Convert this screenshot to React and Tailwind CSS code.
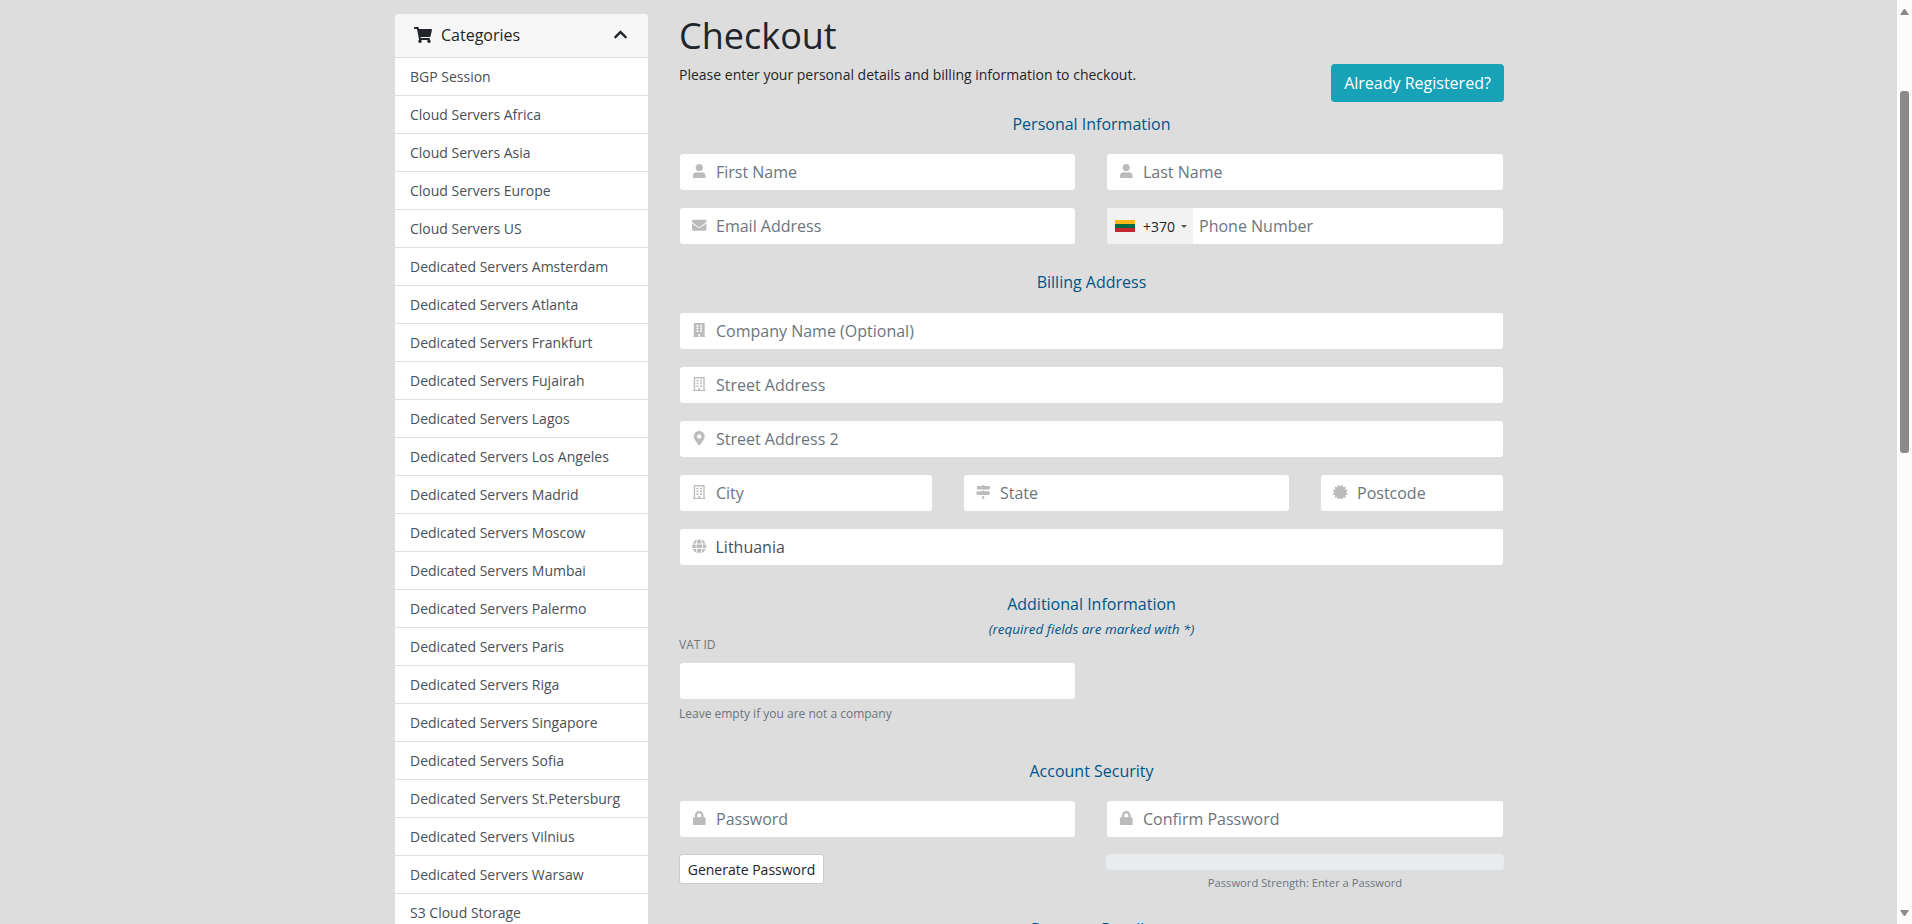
import React from "react";
import { FaUser, FaEnvelope, FaBuilding, FaRegBuilding, FaMapMarkerAlt, FaMapSigns, FaCertificate, FaGlobe, FaLock, FaShoppingCart, FaChevronUp } from "react-icons/fa";

const cats = ["BGP Session","Cloud Servers Africa","Cloud Servers Asia","Cloud Servers Europe","Cloud Servers US","Dedicated Servers Amsterdam","Dedicated Servers Atlanta","Dedicated Servers Frankfurt","Dedicated Servers Fujairah","Dedicated Servers Lagos","Dedicated Servers Los Angeles","Dedicated Servers Madrid","Dedicated Servers Moscow","Dedicated Servers Mumbai","Dedicated Servers Palermo","Dedicated Servers Paris","Dedicated Servers Riga","Dedicated Servers Singapore","Dedicated Servers Sofia","Dedicated Servers St.Petersburg","Dedicated Servers Vilnius","Dedicated Servers Warsaw","S3 Cloud Storage"];

function Field({ icon: Icon, placeholder, className = "", value }) {
  return (
    <div className={"flex items-center h-[36px] bg-white rounded-[3px] " + className}>
      <span className="w-[36px] pl-[3px] flex items-center justify-center shrink-0 text-[#bbbbbb] text-[14.5px] -translate-y-[1px]">
        <Icon />
      </span>
      {value
        ? <span className="text-[16px] text-[#495057] leading-[24px] -ml-[0.5px]">{value}</span>
        : <input placeholder={placeholder} className="flex-1 min-w-0 h-full bg-transparent outline-none text-[16px] placeholder:text-[#6c757d] placeholder:opacity-100" />}
    </div>
  );
}

function Heading({ children, className = "" }) {
  return <h2 className={"text-center text-[16px] leading-[24px] text-[#058] font-normal " + className}>{children}</h2>;
}

export default function App() {
  return (
    <div className="h-[924px] w-full overflow-hidden flex bg-[#dddddd] font-['Open_Sans',sans-serif] text-[#212529]">
      <div className="flex-1 min-w-0 flex justify-center overflow-hidden">
        <div className="w-[1109px] shrink-0 flex items-start ml-[2px]">
          <aside className="w-[253px] shrink-0 mt-[14px] rounded-t-[3px] overflow-hidden">
            <div className="h-[44px] bg-[#f6f6f6] border-b border-[#dfdfdf] flex items-center pl-[19px] pr-[21px] pb-[1px] text-[#212529]">
              <FaShoppingCart className="w-[18px] h-[16px] mr-[9px]" />
              <span className="text-[16px] flex-1">Categories</span>
              <FaChevronUp className="w-[15px] h-[15px] mr-[-1px] -translate-y-[1px]" />
            </div>
            {cats.map((c) => (
              <a key={c} className="block h-[38px] bg-white border-b border-[#dfdfdf] pl-[15px] text-[14px] leading-[37px] text-[#495057]">{c}</a>
            ))}
          </aside>
          <main className="w-[825px] ml-[31px] shrink-0">
            <h1 className="text-[36px] leading-[43px] font-normal mt-[14px] text-[#212529]">Checkout</h1>
            <div className="flex justify-between items-start h-[38px] mt-[7px] -mb-[8px]">
              <p className="text-[14px] leading-[21px]">Please enter your personal details and billing information to checkout.</p>
              <button className="h-[38px] w-[173px] bg-[#17a2b8] text-white text-[16px] rounded-[4px]">Already Registered?</button>
            </div>
            <Heading className="mt-[18px]">Personal Information</Heading>
            <div className="grid grid-cols-[395px_396px] gap-x-[32px] gap-y-[18px] mt-[18px] px-[1px]">
              <Field icon={FaUser} placeholder="First Name" />
              <Field icon={FaUser} placeholder="Last Name" />
              <Field icon={FaEnvelope} placeholder="Email Address" />
              <div className="flex items-center h-[36px] bg-white rounded-[3px] overflow-hidden">
                <div className="w-[86px] h-full bg-[#f2f2f2] flex items-center pl-[8px] shrink-0">
                  <svg width="20" height="12" viewBox="0 0 20 12" className="shrink-0"><rect width="20" height="4" fill="#fdb913"/><rect y="4" width="20" height="4" fill="#006a44"/><rect y="8" width="20" height="4" fill="#c1272d"/></svg>
                  <span className="text-[14px] ml-[8px]">+370</span>
                  <svg width="6" height="3" viewBox="0 0 6 3" className="ml-[6px]"><path d="M0 0h6L3 3z" fill="#555"/></svg>
                </div>
                <input placeholder="Phone Number" className="flex-1 min-w-0 h-full pl-[6px] bg-transparent outline-none text-[16px] placeholder:text-[#6c757d] placeholder:opacity-100" />
              </div>
            </div>
            <Heading className="mt-[26px]">Billing Address</Heading>
            <div className="flex flex-col gap-y-[18px] mt-[19px] px-[1px]">
              <Field icon={FaBuilding} placeholder="Company Name (Optional)" />
              <Field icon={FaRegBuilding} placeholder="Street Address" />
              <Field icon={FaMapMarkerAlt} placeholder="Street Address 2" />
              <div className="flex justify-between">
                <Field icon={FaRegBuilding} placeholder="City" className="w-[252px]" />
                <Field icon={FaMapSigns} placeholder="State" className="w-[325px]" />
                <Field icon={FaCertificate} placeholder="Postcode" className="w-[182px]" />
              </div>
              <Field icon={FaGlobe} value="Lithuania" />
            </div>
            <Heading className="mt-[27px]">Additional Information</Heading>
            <p className="text-center italic text-[13.5px] leading-[18px] text-[#058] mt-[4px]">(required fields are marked with *)</p>
            <label className="block text-[12px] leading-[18px] text-[#6c757d] -mt-[2px]">VAT ID</label>
            <div className="w-[395px] ml-[1px] h-[36px] bg-white rounded-[3px] mt-[9px]"></div>
            <p className="text-[12px] leading-[18px] text-[#6c757d] mt-[6px]">Leave empty if you are not a company</p>
            <Heading className="mt-[36px]">Account Security</Heading>
            <div className="grid grid-cols-[395px_396px] gap-x-[32px] mt-[18px] px-[1px]">
              <Field icon={FaLock} placeholder="Password" />
              <Field icon={FaLock} placeholder="Confirm Password" />
            </div>
            <div className="grid grid-cols-[427px_398px] mt-[17px]">
              <div>
                <button className="h-[30px] w-[145px] bg-white border border-[#cccccc] rounded-[3px] text-[14px]">Generate Password</button>
              </div>
              <div>
                <div className="h-[16px] bg-[#e9ecef] rounded-[4px]"></div>
                <p className="text-center text-[11.2px] leading-[16px] text-[#6c757d] mt-[5px]">Password Strength: Enter a Password</p>
              </div>
            </div>
            <Heading className="mt-[26px]">Payment Details</Heading>
          </main>
        </div>
      </div>
      <div className="w-[15px] shrink-0 h-full bg-[#fcfcfc] flex flex-col items-center pt-[9px] pb-[8px]">
        <svg width="9" height="6" viewBox="0 0 9 6"><path d="M0 6 L3.5 .5 Q4.5 -.3 5.5 .5 L9 6z" fill="#8a8a8a"/></svg>
        <div className="w-[9px] h-[362px] bg-[#8a8a8a] rounded-[3px] mt-[76px] flex-none"></div>
        <div className="flex-1"></div>
        <svg width="9" height="6" viewBox="0 0 9 6"><path d="M0 0 L3.5 5.5 Q4.5 6.3 5.5 5.5 L9 0z" fill="#8a8a8a"/></svg>
      </div>
    </div>
  );
}
